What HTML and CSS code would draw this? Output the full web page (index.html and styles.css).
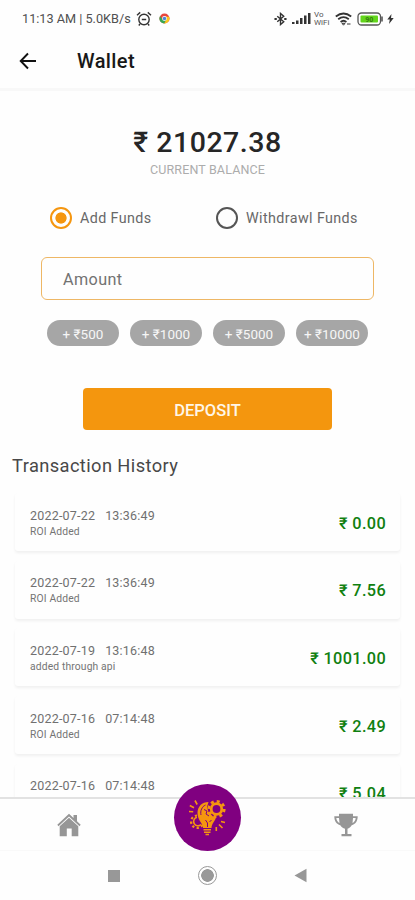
FILE: index.html
```html
<!DOCTYPE html>
<html lang="en">
<head>
<meta charset="utf-8">
<title>Wallet</title>
<link rel="stylesheet" href="styles.css">
</head>
<body>
<div class="screen">
  <div class="status">
    <span class="clock">11:13 AM | 5.0KB/s</span>
    <svg class="alarm" width="16" height="16" viewBox="0 0 16 16" fill="none" stroke="#333" stroke-width="1.4"><circle cx="8" cy="8.5" r="5.2"/><path d="M1 4.2 4.2 1.4M15 4.2 11.8 1.4M5.8 8.5h4.4M4 13l-1.2 1.5M12 13l1.2 1.5"/></svg>
    <svg class="chrome" width="11" height="11" viewBox="0 0 12 12"><circle cx="6" cy="6" r="5.5" fill="#e8453c"/><path d="M1.2 3.2A5.5 5.5 0 0 0 5.8 11.5L8 7.2 4 7.4z" fill="#36a852"/><path d="M5.8 11.5A5.5 5.5 0 0 0 11 4H6.5L8 7.2z" fill="#f9c91b"/><circle cx="6" cy="6" r="2.6" fill="#fff"/><circle cx="6" cy="6" r="1.9" fill="#4a86d8"/></svg>
    <div class="signals">
      <svg class="bluetooth" width="13" height="14" viewBox="0 0 14 14" fill="none" stroke="#333" stroke-width="1.5"><path d="m3.5 4 7 6L7 13V1l3.500 3-7 6"/><path d="M.5 7h2.500M11 7h2.500" stroke-width="2"/></svg>
      <svg width="19" height="13" viewBox="0 0 19 13" fill="#333"><path d="M0 10h2.500v2H0zM4 8.500h2.500V12H4zM8 6h2.500v6H8zM12 3.500h2.500V12H12zM16 1h2.500v11H16z"/></svg>
      <span class="vowifi"><span>Vo</span><span>WiFi</span></span>
      <svg class="wifi" width="17" height="14" viewBox="0 0 17 14" fill="none" stroke="#333" stroke-width="1.800"><path d="M.8 4.500Q8.500-1.500 16.200 4.500M3.200 7.300Q8.500 3 13.800 7.300M5.600 10Q8.500 7.500 11.400 10"/><path d="m7 11.300 1.500 1.900L10 11.300zM12 12h3.500" stroke-width="1"/></svg>
      <svg class="battery" width="27" height="14" viewBox="0 0 27 14"><rect x="1" y="1" width="22.500" height="12" rx="3.500" fill="#fff" stroke="#555" stroke-width="1.300"/><path d="M25 4.500v5" stroke="#555" stroke-width="1.600"/><rect x="3.500" y="3.500" width="17.500" height="7" rx="1" fill="#63d51b"/><text x="12.300" y="9.500" text-anchor="middle" font-family="Roboto, sans-serif" font-size="7" font-weight="700" fill="#347c10">90</text></svg>
      <svg class="bolt" width="7" height="10" viewBox="0 0 7 10"><path d="M4.500 0 .3 5.600h2.500L2 10l4.700-6H4z" fill="#333"/></svg>
    </div>
  </div>
  <header>
    <svg width="18" height="18" viewBox="0 0 18 18" fill="none" stroke="#111" stroke-width="1.900"><path d="M17 9H2M9 1.500 1.700 9 9 16.500"/></svg>
    <h1>Wallet</h1>
  </header>
  <main>
    <div class="balance">₹ 21027.38</div>
    <div class="caption">CURRENT BALANCE</div>
    <div class="modes">
      <label class="mode"><span class="radio on"></span>Add Funds</label>
      <label class="mode"><span class="radio"></span>Withdrawl Funds</label>
    </div>
    <div class="amount">Amount</div>
    <div class="chips">
      <span class="chip">+ ₹500</span><span class="chip">+ ₹1000</span><span class="chip">+ ₹5000</span><span class="chip">+ ₹10000</span>
    </div>
    <div class="deposit">DEPOSIT</div>
    <h2>Transaction History</h2>
    <div class="list">
      <div class="item"><div><div class="date"><span>2022-07-22</span><span>13:36:49</span></div><div class="note">ROI Added</div></div><div class="sum">₹ 0.00</div></div>
      <div class="item"><div><div class="date"><span>2022-07-22</span><span>13:36:49</span></div><div class="note">ROI Added</div></div><div class="sum">₹ 7.56</div></div>
      <div class="item"><div><div class="date"><span>2022-07-19</span><span>13:16:48</span></div><div class="note">added through api</div></div><div class="sum">₹ 1001.00</div></div>
      <div class="item"><div><div class="date"><span>2022-07-16</span><span>07:14:48</span></div><div class="note">ROI Added</div></div><div class="sum">₹ 2.49</div></div>
      <div class="item"><div><div class="date"><span>2022-07-16</span><span>07:14:48</span></div><div class="note"></div></div><div class="sum">₹ 5.04</div></div>
    </div>
  </main>
  <nav class="tabs">
    <svg width="24" height="24" viewBox="0 0 24 24" fill="#969696"><path d="M12 .8 16.500 5V2H20v6.300L23.700 11.800l-1.200 1.400L12 3.600 1.500 13.200.3 11.800z"/><path d="M12 4.800 21.300 13.300V23.200h-6.600v-7.700H9.800v7.700H2.700v-9.900z"/></svg>
    <div class="fab">
      <svg width="38" height="38" viewBox="0 0 38 38" fill="none" stroke="#f5960f" stroke-width="1.600">
        <path d="M14 30C14 25.500 8.500 22 8.500 15 8.500 8.500 13 4 19.500 4L18 9l1.500 5 4.500 4.500 3 .5c-.5 4-4.500 6.500-4.500 11z" fill="#f5960f" stroke="none"/>
        <path d="M12 17c-1-4 1-8.500 4.500-10M15 11.500l3 1.500-1 3 3 2M18.500 29v-4l-2-3M20.500 24l2-2" stroke="#800080" stroke-width="1"/>
        <path d="M14.500 31.800h7.500M15 34.300h6.500M16.500 36.500h3.500"/>
        <circle cx="27.500" cy="11" r="5.300" stroke-width="2.800"/>
        <circle cx="27.500" cy="11" r="7.700" stroke-width="2.800" stroke-dasharray="3 3.048"/>
        <path d="M8 19.300a4.300 4.300 0 1 0 4 7.200"/>
        <path d="M8 17.500a6.200 6.200 0 1 0 5.500 9.500" stroke-width="2.200" stroke-dasharray="2.200 2.400"/>
        <path d="m6 2.500 2.200 4M.8 7.500 5 9.700M0 13.500l4.200.3M32 23.500l4 1M30 26.500l3.500 3.500M27.300 29v4"/>
      </svg>
    </div>
    <svg width="24" height="24" viewBox="0 0 24 24" fill="#969696"><path d="M5 .8h14v2.500h4.700c0 5-2.200 7.700-6 8.900-1 2-2.700 3-4.200 3.500V21h4v2.200h-10V21h3.500v-5.300C9.200 15 7.300 14 6.300 12.200 2.500 11 .3 8.500.3 3.300H5zM5 5H2.300c.3 2.500 1.300 4 3.200 5zM19 5l-.5 5c1.900-1 2.900-2.500 3.200-5z" fill-rule="evenodd"/></svg>
  </nav>
  <div class="system">
    <span class="recent"></span>
    <span class="homekey"></span>
    <svg width="13" height="15" viewBox="0 0 13 15"><path d="M.5 7.500 12.500.8v13.400z" fill="#979797"/></svg>
  </div>
</div>
</body>
</html>
```
FILE: styles.css
```css
* { box-sizing: border-box; }
body { margin: 0; background: #fefefe; font-family: Roboto, "Noto Sans", sans-serif; color: #333; }
.screen { width: 415px; height: 900px; display: flex; flex-direction: column; overflow: hidden; background: #fefefe; }
.status { height: 37px; flex: none; display: flex; align-items: center; padding: 0 21px 0 22px; }
.clock { width: 112px; font-size: 12.700px; white-space: nowrap; color: #505050; }
.alarm { margin-left: 2px; }
.chrome { margin-left: 7px; }
.signals { margin-left: auto; display: flex; align-items: center; }
.signals svg { flex: none; }
.signals .bluetooth { margin-right: 5px; }
.vowifi { display: flex; flex-direction: column; width: 16px; margin: 0 5px 0 3px; font-size: 8px; line-height: 7.500px; color: #555; }
.battery { margin-left: 5px; }
.bolt { margin-left: 3px; }
header { height: 54px; flex: none; display: flex; align-items: center; gap: 40px; padding: 0 19px 4px; border-bottom: 3px solid #f8f8f8; }
h1 { margin: 0; font-size: 20px; font-weight: 500; letter-spacing: .4px; color: #181818; }
main { flex: 1; min-height: 0; overflow: hidden; display: flex; flex-direction: column; }
.balance { margin-top: 34px; height: 36px; line-height: 36px; text-align: center; font-size: 28.500px; font-weight: 500; letter-spacing: .5px; color: #262626; flex: none; }
.caption { height: 18px; line-height: 18px; text-align: center; font-size: 12.500px; letter-spacing: .15px; color: #acacac; flex: none; }
.modes { display: grid; grid-template-columns: 166px 1fr; margin: 27px 0 0 50px; flex: none; }
.mode { display: flex; align-items: center; gap: 8px; height: 24px; font-size: 14.300px; font-weight: 400; letter-spacing: .4px; color: #686868; }
.radio { width: 22px; height: 22px; border: 2px solid #555; border-radius: 50%; flex: none; }
.radio.on { border-color: #f5960f; background: radial-gradient(circle, #f5960f 5.200px, transparent 6px); }
.amount { flex: none; height: 43px; margin: 27px 41px 0; padding-left: 21px; border: 1.500px solid #eeb765; border-radius: 6px; font-size: 16.200px; line-height: 44px; letter-spacing: .4px; color: #727272; }
.chips { flex: none; display: flex; gap: 11px; margin: 20px 0 0 47px; }
.chip { width: 72px; height: 26px; border-radius: 13px; background: #a6a6a6; color: #f6f6f6; font-size: 13.500px; line-height: 28px; font-weight: 400; text-align: center; white-space: nowrap; }
.deposit { flex: none; width: 249px; height: 42px; margin: 42px auto 0 83px; border-radius: 4px; background: #f4960e; color: #fff6e8; font-size: 16.500px; line-height: 45px; font-weight: 500; text-align: center; }
h2 { flex: none; margin: 24px 0 0 12px; height: 24px; font-size: 18.300px; line-height: 24px; font-weight: 400; letter-spacing: .4px; color: #484848; }
.list { flex: none; display: flex; flex-direction: column; gap: 9.700px; padding: 15px 15px 0; }
.item { height: 58px; display: flex; justify-content: space-between; align-items: center; padding: 2px 14px 0 15px; border-radius: 3px; box-shadow: 0 2px 3px rgba(0,0,0,.06); background: #fefefe; }
.date { display: flex; gap: 10px; font-size: 12.500px; line-height: 16px; letter-spacing: .2px; color: #707070; }
.note { height: 15px; font-size: 10.300px; line-height: 15px; letter-spacing: .15px; color: #747474; }
.sum { font-size: 16.300px; font-weight: 500; letter-spacing: .35px; color: #108010; }
.tabs { flex: none; height: 53px; display: flex; justify-content: space-between; align-items: center; padding: 0 57px; border-top: 2px solid #e2e2e2; background: #fefefe; }
.fab { width: 67px; height: 67px; margin-top: -15px; border-radius: 50%; background: #800080; display: flex; align-items: center; justify-content: center; position: relative; }
.system { flex: none; height: 50px; display: flex; align-items: center; padding: 0 0 0 108px; border-top: 1px solid #f9f9f9; }
.recent { width: 12px; height: 12px; background: #989898; }
.homekey { width: 19px; height: 19px; margin: 0 77px 0 78px; border-radius: 50%; border: 1.500px solid #999; background: radial-gradient(circle, #999 6px, transparent 6.600px); }
```
